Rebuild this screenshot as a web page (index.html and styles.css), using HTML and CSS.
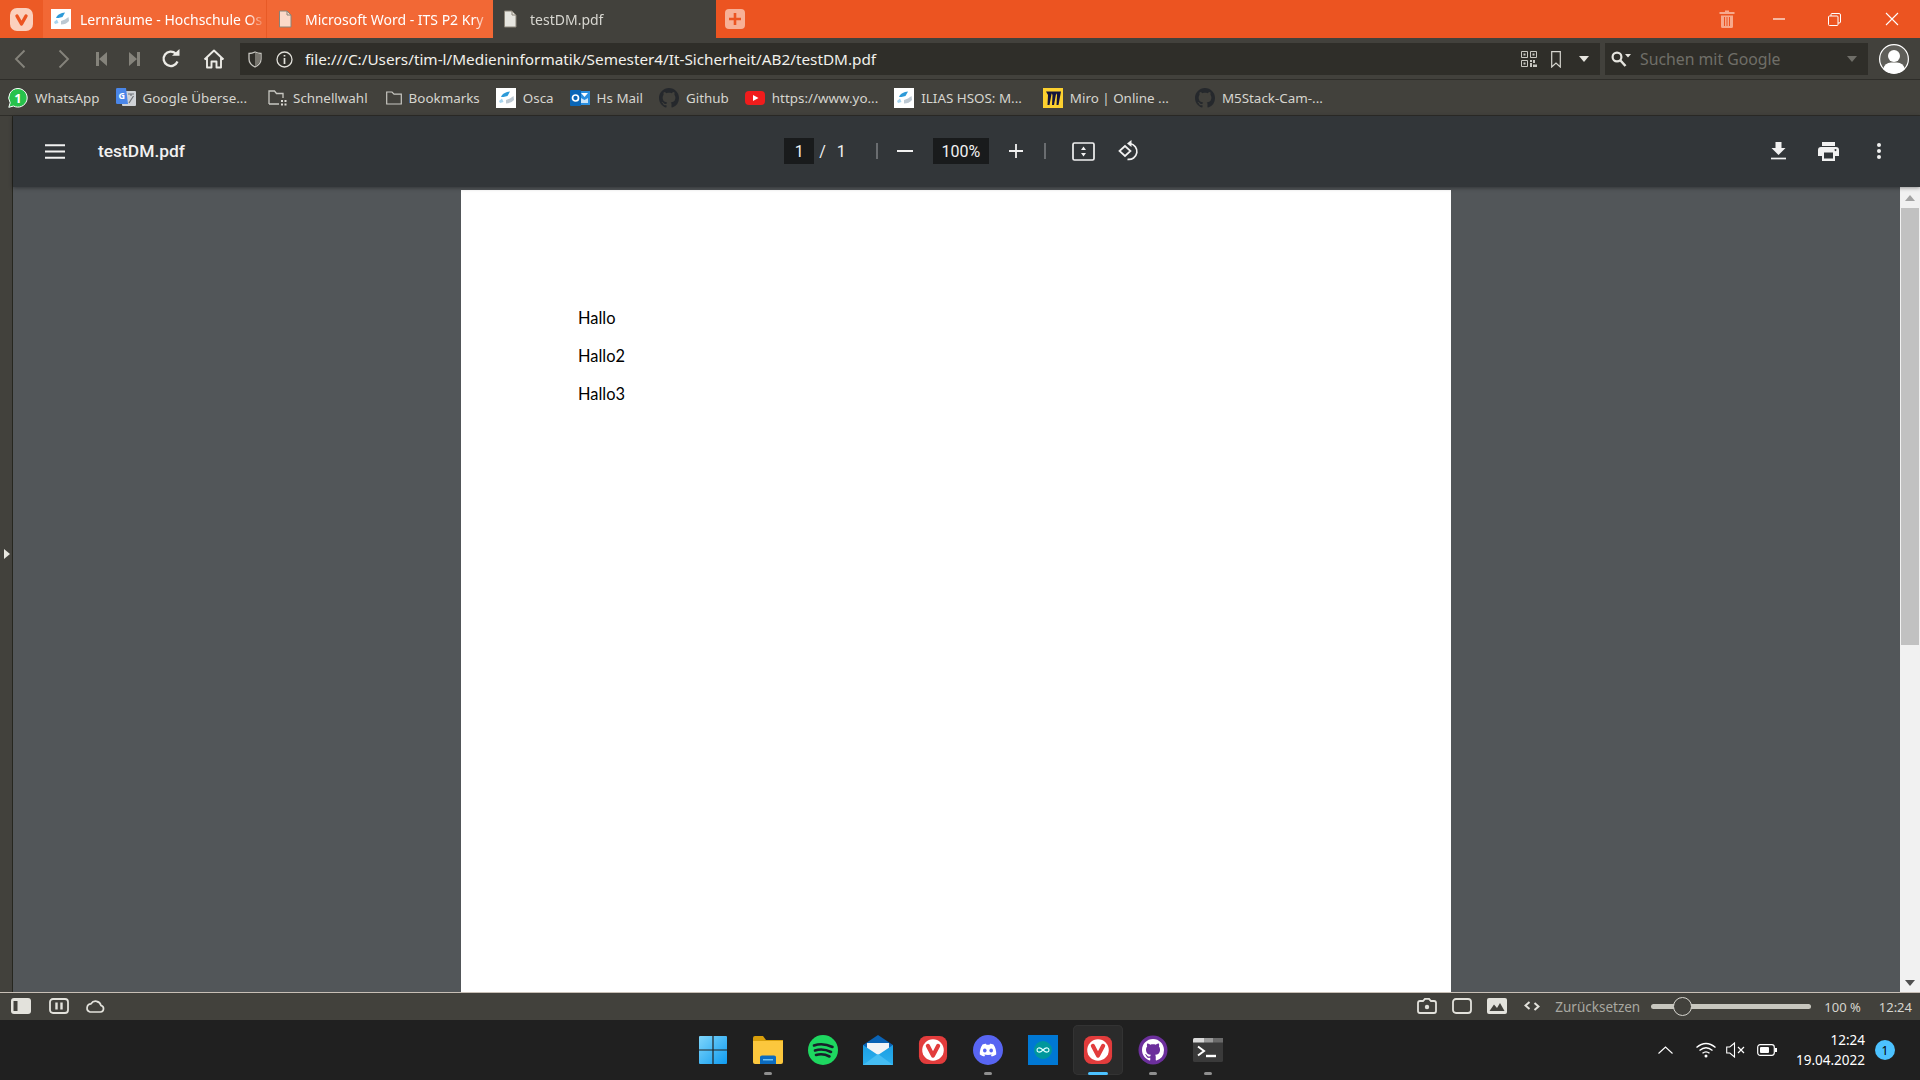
FILE: index.html
```html
<!DOCTYPE html>
<html lang="de">
<head>
    <meta charset="UTF-8">
    <meta name="viewport" content="width=device-width, initial-scale=1.0">
    <title>testDM.pdf</title>
    <link rel="stylesheet" href="styles.css">
</head>
<body>

<!-- shared icons -->
<svg class="svg-defs" aria-hidden="true">
    <defs>
        <linearGradient id="winGrad" x1="0" y1="0" x2="1" y2="1">
            <stop offset="0" stop-color="#7fd6fb"/>
            <stop offset="1" stop-color="#0f9bf0"/>
        </linearGradient>
        <linearGradient id="mailGrad" x1="0" y1="0" x2="0" y2="1">
            <stop offset="0" stop-color="#1b9de2"/>
            <stop offset="1" stop-color="#2bb0ee"/>
        </linearGradient>
    </defs>
    <symbol id="ico-vivaldi" viewBox="0 0 32 32">
        <rect x="1" y="1" width="30" height="30" rx="8" fill="#e23c3c"/>
        <circle cx="16" cy="16" r="11.5" fill="#fff"/>
        <path d="M10.5 11.5 L16 22 L21.5 11.5" fill="none" stroke="#e23c3c" stroke-width="4.4" stroke-linecap="round" stroke-linejoin="round"/>
    </symbol>
    <symbol id="ico-ilias" viewBox="0 0 20 20">
        <rect width="20" height="20" fill="#fff"/>
        <path d="M5 9 Q6 5.5 11 4 L14 3.5 L11.5 8 L7.5 9 Z" fill="#2d9ad8"/>
        <path d="M3 13 L6 10.5 L7.5 14 L4 15 Z" fill="#a5d4ef"/>
        <path d="M10 12 L14 10.5 L17.5 8 L18 12 Q15 15.5 10 15.5 Z" fill="#bcc8d2"/>
    </symbol>
    <symbol id="ico-github" viewBox="0 0 16 16">
        <path d="M8 0C3.58 0 0 3.58 0 8c0 3.54 2.29 6.53 5.47 7.59.4.07.55-.17.55-.38 0-.19-.01-.82-.01-1.49-2.01.37-2.53-.49-2.69-.94-.09-.23-.48-.94-.82-1.13-.28-.15-.68-.52-.01-.53.63-.01 1.08.58 1.23.82.72 1.21 1.87.87 2.33.66.07-.52.28-.87.51-1.07-1.78-.2-3.64-.89-3.64-3.95 0-.87.31-1.59.82-2.15-.08-.2-.36-1.02.08-2.12 0 0 .67-.21 2.2.82.64-.18 1.32-.27 2-.27.68 0 1.36.09 2 .27 1.53-1.04 2.2-.82 2.2-.82.44 1.1.16 1.92.08 2.12.51.56.82 1.27.82 2.15 0 3.07-1.87 3.75-3.65 3.95.29.25.54.73.54 1.48 0 1.07-.01 1.93-.01 2.2 0 .21.15.46.55.38A8.013 8.013 0 0016 8c0-4.42-3.58-8-8-8z"/>
    </symbol>
    <symbol id="ico-file" viewBox="0 0 14 18">
        <path d="M1.5 1 H9 L13 5 V17 H1.5 Z" fill="currentColor" stroke="#8a8478" stroke-width="1"/>
        <path d="M9 1 V5 H13" fill="none" stroke="#8a8478" stroke-width="1"/>
    </symbol>
    <symbol id="ico-caret" viewBox="0 0 12 8">
        <path d="M1 1 H11 L6 7 Z" fill="currentColor"/>
    </symbol>
</svg>

<header class="tabbar">
    <div class="app-menu">
        <svg width="23" height="23" viewBox="0 0 23 23">
            <rect width="23" height="23" rx="7" fill="#fbd0bd"/>
            <path d="M7 8 L11.5 16 L16 8" fill="none" stroke="#ec5421" stroke-width="3.4" stroke-linecap="round" stroke-linejoin="round"/>
        </svg>
    </div>
    <div class="tab tab-first">
        <svg class="tab-fav" width="20" height="20"><use href="#ico-ilias"/></svg>
        <span class="tab-title">Lernräume - Hochschule Os</span>
    </div>
    <div class="tab tab-second">
        <svg class="tab-fav-file" width="14" height="18"><use href="#ico-file"/></svg>
        <span class="tab-title">Microsoft Word - ITS P2 Kry</span>
    </div>
    <div class="tab tab-active">
        <svg class="tab-fav-file" width="14" height="18"><use href="#ico-file"/></svg>
        <span class="tab-title">testDM.pdf</span>
    </div>
    <div class="tab-new">
        <svg width="20" height="20" viewBox="0 0 20 20">
            <rect width="20" height="20" rx="4" fill="#f7b096"/>
            <path d="M10 4 V16 M4 10 H16" stroke="#ec5421" stroke-width="2.6"/>
        </svg>
    </div>
    <div class="win-controls">
        <svg class="win-trash" width="16" height="20" viewBox="0 0 16 20">
            <path d="M6 1.5 H10 V3 H15.5 V5 H.5 V3 H6 Z" fill="#f7a98c"/>
            <path d="M2 6.5 H14 V17.5 Q14 19 12.5 19 H3.5 Q2 19 2 17.5 Z M5 8 V17 H6 V8 Z M7.5 8 V17 H8.5 V8 Z M10 8 V17 H11 V8 Z" fill="#f7a98c" fill-rule="evenodd"/>
        </svg>
        <svg class="win-min" width="12" height="2" viewBox="0 0 12 2"><path d="M0 1 H12" stroke="#fbe2d8" stroke-width="1.4"/></svg>
        <svg class="win-max" width="13" height="13" viewBox="0 0 13 13">
            <rect x=".5" y="3" width="9.5" height="9.5" rx="1" fill="none" stroke="#fff"/>
            <path d="M3 3 V1.5 Q3 .5 4 .5 H11 Q12.5 .5 12.5 2 V9 Q12.5 10 11 10 H10" fill="none" stroke="#fff"/>
        </svg>
        <svg class="win-close" width="14" height="14" viewBox="0 0 14 14"><path d="M1 1 L13 13 M13 1 L1 13" stroke="#fff" stroke-width="1.1"/></svg>
    </div>
</header>

<nav class="navbar">
    <button class="nav-btn btn-back">
        <svg width="12" height="20" viewBox="0 0 12 20"><path d="M10.5 1.5 L2 10 L10.5 18.5" fill="none" stroke="#85837b" stroke-width="1.9"/></svg>
    </button>
    <button class="nav-btn btn-forward">
        <svg width="12" height="20" viewBox="0 0 12 20"><path d="M1.5 1.5 L10 10 L1.5 18.5" fill="none" stroke="#85837b" stroke-width="1.9"/></svg>
    </button>
    <button class="nav-btn btn-first">
        <svg width="11" height="14" viewBox="0 0 11 14"><path d="M0 0 H3 V14 H0 Z M11 0 V14 L3 7 Z" fill="#85837b"/></svg>
    </button>
    <button class="nav-btn btn-last">
        <svg width="11" height="14" viewBox="0 0 11 14"><path d="M8 0 H11 V14 H8 Z M0 0 V14 L8 7 Z" fill="#85837b"/></svg>
    </button>
    <button class="nav-btn btn-reload">
        <svg width="20" height="20" viewBox="0 0 20 20"><path d="M16.5 12.5 A7.2 7.2 0 1 1 14.8 4.6" fill="none" stroke="#ecebe6" stroke-width="2.3"/><path d="M11 6.8 H18.5 V0 Z" fill="#ecebe6"/></svg>
    </button>
    <button class="nav-btn btn-home">
        <svg width="22" height="20" viewBox="0 0 22 20"><path d="M1.5 10.5 L11 1.5 L20.5 10.5 M4 8.5 V18.5 H8.5 V12.5 H13.5 V18.5 H18 V8.5" fill="none" stroke="#ecebe6" stroke-width="1.9" stroke-linejoin="round"/></svg>
    </button>

    <div class="address-field">
        <svg class="addr-shield" width="14" height="17" viewBox="0 0 14 17"><path d="M1 2.5 Q4 2.5 7 1 Q10 2.5 13 2.5 V8 Q13 13 7 16 Q1 13 1 8 Z" fill="none" stroke="#c8c7c1" stroke-width="1.3"/><path d="M7 1.5 Q10 2.7 12.5 3 V8 Q12.5 12.5 7 15.3 Z" fill="#77756e"/></svg>
        <svg class="addr-info" width="17" height="17" viewBox="0 0 17 17"><circle cx="8.5" cy="8.5" r="7.5" fill="none" stroke="#e0dfd9" stroke-width="1.3"/><path d="M8.5 7 V13 M8.5 4 V5.6" stroke="#e0dfd9" stroke-width="1.7"/></svg>
        <span class="addr-url">file:///C:/Users/tim-l/Medieninformatik/Semester4/It-Sicherheit/AB2/testDM.pdf</span>
        <svg class="addr-qr" width="16" height="16" viewBox="0 0 16 16">
            <path d="M.5 .5 H6.5 V6.5 H.5 Z M9.5 .5 H15.5 V6.5 H9.5 Z M.5 9.5 H6.5 V15.5 H.5 Z" fill="none" stroke="#c8c7c1"/>
            <path d="M2.5 2.5 H4.5 V4.5 H2.5 Z M11.5 2.5 H13.5 V4.5 H11.5 Z M2.5 11.5 H4.5 V13.5 H2.5 Z M9 9 H11 V11 H9 Z M12 9 H14 V12 H12 Z M9 12 H11 V16 H9 Z M12 13.5 H16 V16 H12 Z" fill="#c8c7c1"/>
        </svg>
        <svg class="addr-bookmark" width="10" height="17" viewBox="0 0 10 17"><path d="M.7 .7 H9.3 V16 L5 12 L.7 16 Z" fill="none" stroke="#d6d5cf" stroke-width="1.2"/></svg>
        <svg class="addr-caret" width="12" height="8"><use href="#ico-caret"/></svg>
    </div>

    <div class="search-field">
        <svg class="search-ico" width="20" height="16" viewBox="0 0 20 16"><circle cx="6" cy="6" r="4.4" fill="none" stroke="#e6e5df" stroke-width="2.2"/><path d="M9.5 9.5 L14.5 15" stroke="#e6e5df" stroke-width="2.5"/><path d="M14 3 H20 L17 6.5 Z" fill="#e6e5df"/></svg>
        <span class="search-text">Suchen mit Google</span>
        <svg class="search-caret" width="12" height="8"><use href="#ico-caret"/></svg>
    </div>

    <svg class="avatar" width="30" height="30" viewBox="0 0 30 30">
        <circle cx="15" cy="15" r="14.4" fill="#5f5e59" stroke="#fff" stroke-width="1.2"/>
        <circle cx="15" cy="12" r="6" fill="#fff"/>
        <path d="M4 25 Q6 18.5 12 18.5 H18 Q24 18.5 26 25 Q21 29.5 15 29.5 Q9 29.5 4 25 Z" fill="#fff"/>
    </svg>
</nav>

<div class="bookmarks">
    <a class="bm">
        <svg width="20" height="20" viewBox="0 0 20 20">
            <path d="M10 .5 A9.3 9.3 0 1 1 5.5 18 L.8 19.3 L2.2 14.8 A9.3 9.3 0 0 1 10 .5 Z" fill="#27c24c" stroke="#fff" stroke-width="1"/>
            <text x="10" y="15" text-anchor="middle" class="bm-wa-num">1</text>
        </svg>
        <span>WhatsApp</span>
    </a>
    <a class="bm">
        <svg width="20" height="20" viewBox="0 0 20 20">
            <rect x="6" y="3" width="14" height="15" rx="1" fill="#cfd2d6"/>
            <path d="M12 6 H18 M15 6 V8 M13 15 L17.5 8" stroke="#6f7378" stroke-width="1.2" fill="none"/>
            <path d="M1.2 0 H10 L12 16 H1.2 Q0 16 0 14.8 V1.2 Q0 0 1.2 0 Z" fill="#4a86e8"/>
            <text x="5.8" y="11" text-anchor="middle" class="bm-g-letter">G</text>
        </svg>
        <span>Google Überse...</span>
    </a>
    <a class="bm bm-quick">
        <svg width="20" height="18" viewBox="0 0 20 18">
            <path d="M1 15 V2 H6.5 L8.5 4.5 H15 V9 M11 15 H1" fill="none" stroke="#c8c7c1" stroke-width="1.3"/>
            <path d="M13 11 H15 V13 H13 Z M16.5 11 H18.5 V13 H16.5 Z M13 14.5 H15 V16.5 H13 Z M16.5 14.5 H18.5 V16.5 H16.5 Z" fill="#dbdad4"/>
        </svg>
        <span>Schnellwahl</span>
    </a>
    <a class="bm bm-folder">
        <svg width="16" height="14" viewBox="0 0 16 14"><path d="M.7 13 V1 H6 L8 3.2 H15.3 V13 Z" fill="none" stroke="#c8c7c1" stroke-width="1.2"/></svg>
        <span>Bookmarks</span>
    </a>
    <a class="bm">
        <svg width="20" height="20"><use href="#ico-ilias"/></svg>
        <span>Osca</span>
    </a>
    <a class="bm">
        <svg width="20" height="20" viewBox="0 0 20 20">
            <path d="M9 3 H20 V17 H9 Z" fill="#2a8fe0"/>
            <path d="M11 5 H18 L14.5 9 Z" fill="#fff"/>
            <path d="M11 10 L14.5 12 L18 10 V15 H11 Z" fill="#cbe4f8"/>
            <rect y="2" width="11" height="16" rx="1" fill="#0a66b7"/>
            <circle cx="5.5" cy="10" r="3" fill="none" stroke="#fff" stroke-width="1.7"/>
        </svg>
        <span>Hs Mail</span>
    </a>
    <a class="bm">
        <svg class="bm-gh" width="20" height="20"><use href="#ico-github"/></svg>
        <span>Github</span>
    </a>
    <a class="bm">
        <svg width="20" height="20" viewBox="0 0 20 20">
            <rect y="3" width="20" height="14" rx="4" fill="#f01c1c"/>
            <path d="M8 7 L13.5 10 L8 13 Z" fill="#fff"/>
        </svg>
        <span>https://www.yo...</span>
    </a>
    <a class="bm bm-ilias">
        <svg width="20" height="20"><use href="#ico-ilias"/></svg>
        <span>ILIAS HSOS: M...</span>
    </a>
    <a class="bm bm-miro">
        <svg width="20" height="20" viewBox="0 0 20 20">
            <rect width="20" height="20" fill="#fcd02f"/>
            <path d="M6 3.5 H9 L6.5 17 H4.5 L5 7 L3 3.5 Z M10.5 3.5 H13.5 L11 17 H9 L9.5 7 L7.8 3.5 Z M15 3.5 H18 L15.5 17 H13.5 L14 7 L12.3 3.5 Z" fill="#12133c"/>
        </svg>
        <span>Miro | Online ...</span>
    </a>
    <a class="bm">
        <svg class="bm-gh" width="20" height="20"><use href="#ico-github"/></svg>
        <span>M5Stack-Cam-...</span>
    </a>
</div>

<main class="workspace">
    <aside class="side-strip">
        <svg width="6" height="10" viewBox="0 0 6 10"><path d="M0 0 L6 5 L0 10 Z" fill="#e8e7e1"/></svg>
    </aside>

    <section class="viewer">
        <div class="pdf-toolbar">
            <div class="pdf-left">
                <svg width="20" height="15" viewBox="0 0 20 15"><path d="M0 1.2 H20 M0 7.5 H20 M0 13.8 H20" stroke="#f1f1f1" stroke-width="2"/></svg>
                <span class="pdf-title">testDM.pdf</span>
            </div>
            <div class="pdf-center">
                <span class="pdf-input page-input">1</span>
                <span class="pdf-sep-slash">/</span>
                <span class="pdf-total">1</span>
                <span class="pdf-divider first-divider"></span>
                <svg class="pdf-minus" width="16" height="2" viewBox="0 0 16 2"><path d="M0 1 H16" stroke="#f1f1f1" stroke-width="2"/></svg>
                <span class="pdf-input zoom-input">100%</span>
                <svg class="pdf-plus" width="14" height="14" viewBox="0 0 14 14"><path d="M0 7 H14 M7 0 V14" stroke="#f1f1f1" stroke-width="1.8"/></svg>
                <span class="pdf-divider second-divider"></span>
                <svg class="pdf-fit" width="23" height="19" viewBox="0 0 23 19">
                    <rect x="1" y="1" width="21" height="17" rx="1.5" fill="none" stroke="#f1f1f1" stroke-width="1.7"/>
                    <path d="M11.5 4.5 L14 8 H9 Z M11.5 14.5 L14 11 H9 Z" fill="#f1f1f1"/>
                </svg>
                <svg class="pdf-rotate" width="22" height="22" viewBox="0 0 22 22">
                    <path d="M12 3.5 A8 8 0 1 1 9.5 19.3" fill="none" stroke="#f1f1f1" stroke-width="1.7"/>
                    <path d="M13.5 0 V7 L9 3.5 Z" fill="#f1f1f1"/>
                    <path d="M1.5 11 L7 6 L12.5 11 L7 16 Z" fill="none" stroke="#f1f1f1" stroke-width="1.7"/>
                </svg>
            </div>
            <div class="pdf-right">
                <svg width="15" height="18" viewBox="0 0 15 18"><path d="M4.5 0 H10.5 V6 H14.5 L7.5 13 L.5 6 H4.5 Z" fill="#f1f1f1"/><path d="M0 16.5 H15" stroke="#f1f1f1" stroke-width="1.7"/></svg>
                <svg width="21" height="19" viewBox="0 0 21 19"><path d="M4 0 H17 V4 H4 Z" fill="#f1f1f1"/><path d="M3 5 H18 Q21 5 21 8 V14 H17 V19 H4 V14 H0 V8 Q0 5 3 5 Z M6 10.5 V16.5 H15 V10.5 Z M17.5 7 A1 1 0 1 0 17.51 7 Z" fill="#f1f1f1" fill-rule="evenodd"/></svg>
                <svg class="pdf-more" width="4" height="16" viewBox="0 0 4 16"><circle cx="2" cy="2" r="2" fill="#f1f1f1"/><circle cx="2" cy="8" r="2" fill="#f1f1f1"/><circle cx="2" cy="14" r="2" fill="#f1f1f1"/></svg>
            </div>
        </div>

        <div class="pdf-body">
            <div class="pdf-canvas">
                <article class="pdf-page">
                    <p>Hallo</p>
                    <p>Hallo2</p>
                    <p>Hallo3</p>
                </article>
            </div>
            <div class="scrollbar">
                <svg width="10" height="6" viewBox="0 0 10 6"><path d="M0 6 L5 0 L10 6 Z" fill="#a3a3a3"/></svg>
                <div class="scroll-track"><div class="scroll-thumb"></div></div>
                <svg width="10" height="6" viewBox="0 0 10 6"><path d="M0 0 L5 6 L10 0 Z" fill="#505050"/></svg>
            </div>
        </div>
    </section>
</main>

<footer class="statusbar">
    <div class="status-left">
        <svg width="20" height="16" viewBox="0 0 20 16"><rect width="20" height="16" rx="3" fill="#e3e2dc"/><rect x="2.5" y="3" width="4" height="10" fill="#42413c"/></svg>
        <svg width="20" height="16" viewBox="0 0 20 16"><rect x="1" y="1" width="18" height="14" rx="3" fill="none" stroke="#e3e2dc" stroke-width="1.8"/><path d="M7.5 4.5 V11.5 M12.5 4.5 V11.5" stroke="#e3e2dc" stroke-width="2.4"/></svg>
        <svg class="status-cloud" width="20" height="14" viewBox="0 0 20 14"><path d="M5 13 H15.5 A3.3 3.3 0 0 0 16 6.5 A5.5 5.5 0 0 0 6 4.8 A4.2 4.2 0 0 0 5 13 Z" fill="none" stroke="#e3e2dc" stroke-width="1.7"/></svg>
    </div>
    <div class="status-right">
        <svg class="st-ico" width="20" height="16" viewBox="0 0 20 16"><path d="M3 3 H6 L8 .8 H12 L14 3 H17 Q19 3 19 5 V13 Q19 15 17 15 H3 Q1 15 1 13 V5 Q1 3 3 3 Z" fill="none" stroke="#e3e2dc" stroke-width="1.8"/><circle cx="10" cy="9" r="2.2" fill="#e3e2dc"/></svg>
        <svg class="st-ico" width="20" height="16" viewBox="0 0 20 16"><rect x="1" y="1" width="18" height="14" rx="3" fill="none" stroke="#e3e2dc" stroke-width="1.8"/></svg>
        <svg class="st-ico" width="20" height="16" viewBox="0 0 20 16"><rect width="20" height="16" rx="2" fill="#e3e2dc"/><path d="M2.5 13 L7 6.5 L10 10 L13 5 L17.5 13 Z" fill="#42413c"/></svg>
        <svg class="st-code" width="16" height="10" viewBox="0 0 16 10"><path d="M5.5 1 L1.5 4.5 L5.5 8 M10.5 2 L14.5 5.5 L10.5 9" fill="none" stroke="#e3e2dc" stroke-width="2"/></svg>
        <span class="st-reset">Zurücksetzen</span>
        <div class="st-slider"><span class="st-thumb"></span></div>
        <span class="st-zoom">100 %</span>
        <span class="st-clock">12:24</span>
    </div>
</footer>

<footer class="taskbar">
    <div class="task-spacer"></div>
    <div class="task-apps">
        <div class="task-app">
            <svg width="30" height="30" viewBox="0 0 30 30">
                <path d="M1 2 Q1 1 2 1 H14.4 V14.4 H1 Z M15.6 1 H28 Q29 1 29 2 V14.4 H15.6 Z M1 15.6 H14.4 V29 H2 Q1 29 1 28 Z M15.6 15.6 H29 V28 Q29 29 28 29 H15.6 Z" fill="url(#winGrad)"/>
            </svg>
        </div>
        <div class="task-app is-open">
            <svg width="30" height="30" viewBox="0 0 30 30">
                <path d="M0 3 Q0 1 2 1 H10 L13 5 H30 V12 H0 Z" fill="#d99f0b"/>
                <path d="M0 6 H30 V27 Q30 29 28 29 H2 Q0 29 0 27 Z" fill="#fcc73d"/>
                <path d="M7 22 Q7 20.5 9 20.5 H21 Q23 20.5 23 22 V29 H7 Z" fill="#0c6cc0"/>
                <rect x="10" y="24" width="10" height="1.5" fill="#6cc0f5"/>
            </svg>
        </div>
        <div class="task-app">
            <svg width="30" height="30" viewBox="0 0 30 30">
                <circle cx="15" cy="15" r="15" fill="#1ed760"/>
                <path d="M6 10.5 Q15 7.5 24.5 12 M7 15.5 Q15 13 23 17 M8 20 Q15 18 21.5 21.5" fill="none" stroke="#17202a" stroke-width="2.6" stroke-linecap="round"/>
            </svg>
        </div>
        <div class="task-app">
            <svg width="30" height="30" viewBox="0 0 30 30">
                <path d="M0 10 L15 0 L30 10 V15 H0 Z" fill="#0a63b5"/>
                <path d="M4 8 H26 V17 L15 22 L4 17 Z" fill="#f2f4f6"/>
                <path d="M0 10 L15 20 L30 10 V30 H0 Z" fill="url(#mailGrad)"/>
                <path d="M0 30 L15 19 L30 30 Z" fill="#45bdf3"/>
            </svg>
        </div>
        <div class="task-app">
            <svg width="30" height="30"><use href="#ico-vivaldi"/></svg>
        </div>
        <div class="task-app is-open">
            <svg width="30" height="30" viewBox="0 0 30 30">
                <circle cx="15" cy="15" r="15" fill="#5865f2"/>
                <path d="M9.5 9.5 Q12 8.5 13 8.8 L13.5 9.8 Q15 9.5 16.5 9.8 L17 8.8 Q18 8.5 20.5 9.5 Q23.5 14 23.2 19.5 Q21 21.2 18.8 21.5 L17.8 20 L19.5 19 Q15 21 10.5 19 L12.2 20 L11.2 21.5 Q9 21.2 6.8 19.5 Q6.5 14 9.5 9.5 Z" fill="#fff"/>
                <ellipse cx="11.8" cy="15.5" rx="1.8" ry="2" fill="#5865f2"/>
                <ellipse cx="18.2" cy="15.5" rx="1.8" ry="2" fill="#5865f2"/>
            </svg>
        </div>
        <div class="task-app">
            <svg width="30" height="30" viewBox="0 0 30 30">
                <rect width="30" height="30" fill="#0078d4"/>
                <circle cx="15" cy="15" r="9" fill="#00979c"/>
                <path d="M15 15 Q12.5 12.5 10.5 13 A2.1 2.1 0 0 0 10.5 17 Q12.5 17.5 15 15 Q17.5 12.5 19.5 13 A2.1 2.1 0 0 1 19.5 17 Q17.5 17.5 15 15 Z" fill="none" stroke="#dff" stroke-width="1.2"/>
            </svg>
        </div>
        <div class="task-app is-active">
            <svg width="30" height="30"><use href="#ico-vivaldi"/></svg>
        </div>
        <div class="task-app is-open">
            <svg width="30" height="30" viewBox="0 0 30 30">
                <circle cx="15" cy="15" r="14.5" fill="#6c2f9c"/>
                <svg x="4" y="4" width="22" height="22" class="task-gh"><use href="#ico-github"/></svg>
            </svg>
        </div>
        <div class="task-app is-open">
            <svg width="30" height="24" viewBox="0 0 30 24">
                <rect width="30" height="24" rx="1.5" fill="#3a3a3a"/>
                <path d="M1.5 0 H11 V4.5 H0 V1.5 Q0 0 1.5 0 Z" fill="#d9d9d9"/>
                <rect x="11" width="9" height="4.5" fill="#9a9a9a"/>
                <rect x="20" width="10" height="4.5" fill="#6a6a6a"/>
                <path d="M5 8.5 L11 13 L5 17.5" fill="none" stroke="#fff" stroke-width="2"/>
                <path d="M13 18 H23" stroke="#fff" stroke-width="2.4"/>
            </svg>
        </div>
    </div>
    <div class="tray">
        <svg class="tray-chevron" width="15" height="8" viewBox="0 0 15 8"><path d="M.5 7.5 L7.5 1 L14.5 7.5" fill="none" stroke="#fff" stroke-width="1.1"/></svg>
        <svg class="tray-wifi" width="20" height="16" viewBox="0 0 20 16"><path d="M.5 5.5 Q10 -2.5 19.5 5.5 M3.5 8.5 Q10 3 16.5 8.5 M6.5 11.3 Q10 8.3 13.5 11.3" fill="none" stroke="#fff" stroke-width="1.3"/><circle cx="10" cy="14" r="1.5" fill="#fff"/></svg>
        <svg class="tray-sound" width="20" height="16" viewBox="0 0 20 16"><path d="M.7 5 H3.8 L8.5 1 V15 L3.8 11 H.7 Z" fill="none" stroke="#fff" stroke-width="1.1"/><path d="M12 5 L18 11 M18 5 L12 11" stroke="#fff" stroke-width="1.2"/></svg>
        <svg class="tray-battery" width="20" height="12" viewBox="0 0 20 12"><rect x=".7" y=".7" width="16.6" height="10.6" rx="2.5" fill="none" stroke="#fff" stroke-width="1.2"/><rect x="3" y="3" width="9" height="6" rx="1" fill="#fff"/><rect x="18" y="4" width="2" height="4" fill="#fff"/></svg>
        <div class="tray-clock">
            <span>12:24</span>
            <span>19.04.2022</span>
        </div>
        <span class="tray-badge">1</span>
    </div>
</footer>

</body>
</html>
```

FILE: styles.css
```css
* {
    box-sizing: border-box;
}
html, body {
    height: 100%;
}
body {
    margin: 0;
    display: flex;
    flex-direction: column;
    overflow: hidden;
    background-color: #42413c;
    color: #fff;
    font-family: "Noto Sans", "Open Sans", sans-serif;
    font-size: 14px;
}
svg {
    display: block;
    flex: none;
}
.svg-defs {
    position: absolute;
    width: 0;
    height: 0;
}

/* tab bar */
.tabbar {
    display: flex;
    align-items: stretch;
    height: 38px;
    flex: none;
    background-color: #ec5421;
}
.app-menu {
    width: 43px;
    display: flex;
    align-items: center;
    justify-content: center;
    background-color: #ec5a25;
}
.tab {
    width: 223px;
    display: flex;
    align-items: center;
    overflow: hidden;
    background-color: #f26835;
    white-space: nowrap;
    color: #fff;
}
.tab-first {
    padding-left: 8px;
}
.tab-first .tab-title {
    margin-left: 9px;
}
.tab-second {
    width: 227px;
    padding-left: 11px;
    border-left: 1px solid #e85a26;
}
.tab-second .tab-fav-file {
    color: #fbd9c9;
}
.tab-second .tab-title {
    margin-left: 13px;
}
.tab-active {
    background-color: #42413c;
    padding-left: 10px;
    color: #d8d7d1;
}
.tab-active .tab-fav-file {
    color: #e6e5df;
}
.tab-active .tab-title {
    margin-left: 13px;
}
.tab-title {
    flex: 1;
    min-width: 0;
    -webkit-mask-image: linear-gradient(to right, #000 90%, transparent 100%);
    mask-image: linear-gradient(to right, #000 90%, transparent 100%);
}
.tab-new {
    display: flex;
    align-items: center;
    margin-left: 9px;
}
.win-controls {
    margin-left: auto;
    display: flex;
    align-items: center;
}
.win-trash {
    margin-right: 38px;
}
.win-min {
    margin-right: 43px;
}
.win-max {
    margin-right: 44px;
}
.win-close {
    margin-right: 21px;
}

/* address bar */
.navbar {
    height: 42px;
    flex: none;
    display: flex;
    align-items: center;
    padding-top: 1px;
    background-color: #42413c;
    border-bottom: 1px solid #2e2d29;
}
.nav-btn {
    width: 30px;
    height: 30px;
    padding: 0;
    flex: none;
    display: flex;
    align-items: center;
    justify-content: center;
    border: none;
    background: none;
}
.btn-back {
    margin-left: 5px;
}
.btn-forward {
    margin-left: 14px;
}
.btn-first {
    margin-left: 7px;
}
.btn-last {
    margin-left: 3px;
}
.btn-reload {
    margin-left: 7px;
}
.btn-home {
    margin-left: 13px;
}
.address-field {
    margin-left: 11px;
    width: 1360px;
    height: 32px;
    display: flex;
    align-items: center;
    background-color: #2f2e29;
}
.addr-shield {
    margin-left: 8px;
}
.addr-info {
    margin-left: 14px;
}
.addr-url {
    margin-left: 12px;
    color: #f2f1ec;
    font-size: 15.3px;
    white-space: nowrap;
}
.addr-qr {
    margin-left: auto;
}
.addr-bookmark {
    margin-left: 14px;
}
.addr-caret {
    margin-left: 17px;
    margin-right: 10px;
    color: #e6e5df;
}
.search-field {
    margin-left: 5px;
    width: 263px;
    height: 32px;
    display: flex;
    align-items: center;
    background-color: #2f2e29;
    color: #6f6e68;
}
.search-ico {
    margin-left: 6px;
}
.search-text {
    margin-left: 9px;
    font-size: 15.8px;
}
.search-caret {
    margin-left: auto;
    margin-right: 10px;
}
.avatar {
    margin-left: 11px;
}

/* bookmarks */
.bookmarks {
    height: 36px;
    flex: none;
    display: flex;
    align-items: center;
    padding-left: 8px;
    gap: 16px;
    background-color: #42413c;
    border-bottom: 1px solid #2e2d29;
    font-size: 13.4px;
    color: #d6d5cf;
}
.bm {
    display: flex;
    align-items: center;
    gap: 7px;
    white-space: nowrap;
}
.bm-quick {
    margin-left: 5px;
    gap: 5px;
}
.bm-folder {
    margin-left: 2px;
}
.bm-ilias {
    margin-right: 5px;
}
.bm-miro {
    margin-right: 10px;
}
.bm-gh {
    fill: #25282c;
}
.bm-wa-num {
    font-size: 13px;
    font-weight: 700;
    fill: #fff;
}
.bm-g-letter {
    font-size: 9px;
    font-weight: 700;
    fill: #fff;
}

/* main area */
.workspace {
    flex: 1;
    min-height: 0;
    display: flex;
}
.side-strip {
    width: 13px;
    flex: none;
    display: flex;
    align-items: center;
    padding-left: 4px;
    background-color: #42413c;
    border-right: 1px solid #26261f;
}
.viewer {
    flex: 1;
    min-width: 0;
    display: flex;
    flex-direction: column;
}
.pdf-toolbar {
    height: 71px;
    flex: none;
    display: grid;
    grid-template-columns: 1fr auto 1fr;
    align-items: center;
    padding-right: 9px;
    padding-bottom: 1px;
    background-color: #323639;
    box-shadow: 0 1px 4px rgba(0, 0, 0, 0.4);
    position: relative;
    font-family: Roboto, "Noto Sans", sans-serif;
}
.pdf-left {
    display: flex;
    align-items: center;
    padding-left: 32px;
}
.pdf-title {
    margin-left: 33px;
    font-size: 17.4px;
    font-weight: 500;
    color: #f1f1f1;
}
.pdf-center {
    display: flex;
    align-items: center;
    color: #f1f1f1;
    font-size: 16px;
}
.pdf-input {
    height: 26px;
    display: flex;
    align-items: center;
    justify-content: center;
    background-color: #191b1c;
}
.page-input {
    width: 30px;
}
.pdf-sep-slash {
    margin-left: 5px;
}
.pdf-total {
    margin-left: 11px;
}
.pdf-divider {
    width: 2px;
    height: 16px;
    background-color: #6a6d70;
}
.first-divider {
    margin-left: 30px;
}
.pdf-minus {
    margin-left: 19px;
}
.zoom-input {
    width: 56px;
    margin-left: 20px;
}
.pdf-plus {
    margin-left: 20px;
}
.second-divider {
    margin-left: 21px;
}
.pdf-fit {
    margin-left: 26px;
}
.pdf-rotate {
    margin-left: 23px;
}
.pdf-right {
    display: flex;
    align-items: center;
    justify-content: flex-end;
    padding-right: 30px;
    gap: 32px;
}
.pdf-more {
    margin-left: 6px;
}
.pdf-body {
    flex: 1;
    min-height: 0;
    display: flex;
}
.pdf-canvas {
    flex: 1;
    min-width: 0;
    overflow: hidden;
    background-color: #525659;
    display: flex;
    justify-content: center;
    padding-top: 3px;
}
.pdf-page {
    width: 990px;
    height: 1400px;
    flex: none;
    margin-right: 1px;
    padding: 117px 0 0 117px;
    background-color: #fff;
    color: #000;
    font-family: Lato, "Noto Sans", sans-serif;
    font-size: 16.4px;
}
.pdf-page p {
    margin: 0 0 16px;
    line-height: 22px;
}
.scrollbar {
    width: 20px;
    flex: none;
    display: flex;
    flex-direction: column;
    align-items: center;
    background-color: #f1f1f1;
    padding: 8px 0 6px;
}
.scroll-track {
    flex: 1;
    width: 100%;
    padding-top: 7px;
}
.scroll-thumb {
    height: 437px;
    margin: 0 1px;
    background-color: #c1c1c1;
}

/* status bar */
.statusbar {
    height: 28px;
    flex: none;
    display: flex;
    align-items: center;
    justify-content: space-between;
    background-color: #42413c;
    border-top: 1px solid #c8bfb6;
    font-size: 13px;
    color: #d6d5cf;
}
.status-left {
    display: flex;
    align-items: center;
    padding-left: 11px;
    padding-bottom: 2px;
    gap: 18px;
}
.status-cloud {
    margin-left: -2px;
}
.status-right {
    display: flex;
    align-items: center;
    padding-right: 8px;
}
.st-ico {
    margin-right: 15px;
    margin-bottom: 2px;
}
.st-code {
    margin-left: 2px;
    margin-right: 15px;
    margin-bottom: 2px;
}
.st-reset {
    color: #a9a8a1;
    width: 84px;
    font-size: 13.5px;
    white-space: nowrap;
}
.st-slider {
    position: relative;
    width: 160px;
    height: 5px;
    margin-left: 12px;
    border-radius: 3px;
    background-color: #c8c7bf;
}
.st-thumb {
    position: absolute;
    left: 22px;
    top: -7px;
    width: 19px;
    height: 19px;
    border-radius: 50%;
    border: 1px solid #d6d5cf;
    background-color: #42413c;
}
.st-zoom {
    margin-left: 13px;
    white-space: nowrap;
}
.st-clock {
    margin-left: 18px;
}

/* windows taskbar */
.taskbar {
    height: 60px;
    flex: none;
    display: grid;
    grid-template-columns: 1fr auto 1fr;
    align-items: center;
    background-color: #202020;
}
.task-apps {
    display: flex;
    align-items: center;
}
.task-app {
    position: relative;
    width: 55px;
    height: 50px;
    display: flex;
    align-items: center;
    justify-content: center;
    border-radius: 5px;
}
.task-gh {
    fill: #fff;
}
.task-app.is-open::after,
.task-app.is-active::after {
    content: "";
    position: absolute;
    bottom: 0;
    left: 50%;
    width: 8px;
    height: 3px;
    margin-left: -4px;
    border-radius: 2px;
    background-color: #8f8f8f;
}
.task-app.is-active {
    width: 50px;
    margin: 0 2.5px;
    background-color: #2b2b2b;
    box-shadow: inset 0 0 0 1px #333;
}
.task-app.is-active::after {
    width: 20px;
    margin-left: -10px;
    background-color: #4cc2ff;
}
.tray {
    display: flex;
    align-items: center;
    justify-content: flex-end;
    padding-right: 25px;
}
.tray-wifi {
    margin-left: 23px;
}
.tray-sound {
    margin-left: 10px;
}
.tray-battery {
    margin-left: 11px;
}
.tray-clock {
    margin-left: 19px;
    display: flex;
    flex-direction: column;
    align-items: flex-end;
    font-size: 13.5px;
    line-height: 20px;
    color: #fff;
}
.tray-badge {
    margin-left: 10px;
    width: 20px;
    height: 20px;
    border-radius: 50%;
    display: flex;
    align-items: center;
    justify-content: center;
    background-color: #4cc2ff;
    color: #000;
    font-size: 12px;
}
```
